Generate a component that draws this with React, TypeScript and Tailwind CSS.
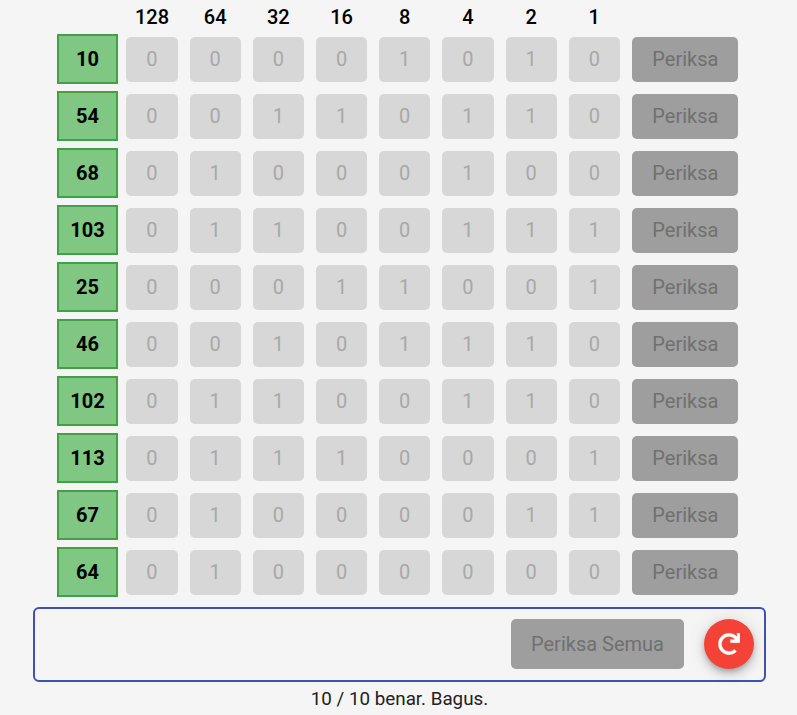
import React from 'react';
import { FaRedo } from 'react-icons/fa';

const weights = [128, 64, 32, 16, 8, 4, 2, 1];

const rows = [
  { value: 10, bits: '00001010' },
  { value: 54, bits: '00110110' },
  { value: 68, bits: '01000100' },
  { value: 103, bits: '01100111' },
  { value: 25, bits: '00011001' },
  { value: 46, bits: '00101110' },
  { value: 102, bits: '01100110' },
  { value: 113, bits: '01110001' },
  { value: 67, bits: '01000011' },
  { value: 64, bits: '01000000' },
];

const Row = ({ value, bits }: { value: number; bits: string }) => (
  <div className="flex items-center h-[50px] mb-[7px]">
    <div className="w-[61px] h-[50px] mr-[8.4px] flex items-center justify-center bg-[#81c784] border-2 border-[#43a047] text-[20px] font-bold text-black">
      {value}
    </div>
    <div className="grid grid-cols-[repeat(8,51.2px)] gap-x-3">
      {bits.split('').map((bit, i) => (
        <button key={i} disabled className="h-[45px] rounded-[5px] bg-[#d7d7d7] text-[20px] text-[#a8a8a8]">
          {bit}
        </button>
      ))}
    </div>
    <button disabled className="ml-3 w-[106px] h-[45px] pl-px rounded-[5px] bg-[#9e9e9e] text-[20px] text-[#707070]">
      Periksa
    </button>
  </div>
);

const App = () => {
  return (
    <div className="w-[797px] h-[715px] overflow-hidden bg-[#f5f5f5] font-['Roboto',sans-serif]">
      <div className="pl-[57px]">
        <div className="flex h-[33px] mb-px items-center pl-[69.4px]">
          <div className="grid grid-cols-[repeat(8,51.2px)] gap-x-3">
            {weights.map((w) => (
              <div key={w} className="text-center text-[20px] font-medium text-black">
                {w}
              </div>
            ))}
          </div>
        </div>
        {rows.map((r) => (
          <Row key={r.value} value={r.value} bits={r.bits} />
        ))}
      </div>
      <div className="ml-[33px] mt-[10px] w-[733px] h-[75px] flex items-center justify-end gap-5 pr-[10px] pb-px border-2 border-[#3f51b5] rounded-md">
        <button disabled className="w-[173px] h-[50px] rounded-[5px] bg-[#9e9e9e] text-[20px] text-[#707070]">
          Periksa Semua
        </button>
        <button className="w-[50px] h-[50px] rounded-full bg-[#f44336] flex items-center justify-center text-white shadow-[0_3px_5px_-1px_rgba(0,0,0,0.2),0_6px_10px_0_rgba(0,0,0,0.14),0_1px_18px_0_rgba(0,0,0,0.12)]">
          <FaRedo className="w-[22px] h-[22px] stroke-current stroke-[8]" />
        </button>
      </div>
      <div className="mt-[3px] pl-[2px] text-center text-[18.8px] text-[#212121]">10 / 10 benar. Bagus.</div>
    </div>
  );
};

export default App;
